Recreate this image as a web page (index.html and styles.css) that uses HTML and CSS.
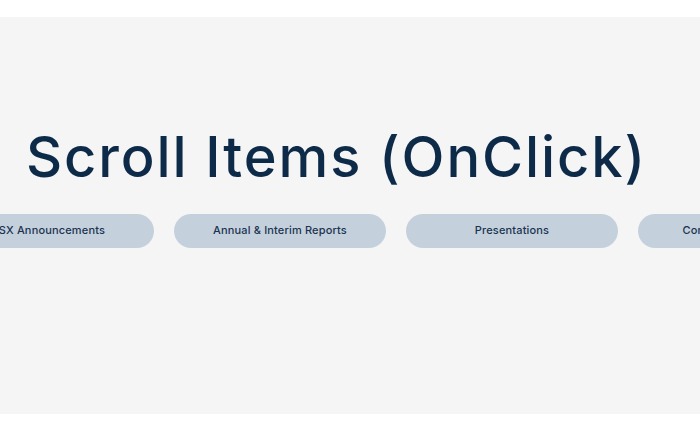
FILE: index.html
```html
<!DOCTYPE html>
<html>
<head>
<meta charset="utf-8">
<link rel="stylesheet" href="styles.css">
</head>
<body>
<div class="page">
  <section class="panel">
    <h1 class="title">Scroll Items (OnClick)</h1>
    <div class="scroller">
      <div class="track">
        <button class="pill">ASX Announcements</button>
        <button class="pill">Annual &amp; Interim Reports</button>
        <button class="pill">Presentations</button>
        <button class="pill">Corporate Governance</button>
      </div>
    </div>
  </section>
</div>
</body>
</html>
```
FILE: styles.css
```css
html, body {
  margin: 0;
  padding: 0;
  background: #ffffff;
}
.page {
  padding-top: 17px;
  width: 700px;
  height: 433px;
  box-sizing: border-box;
  overflow: hidden;
}
.panel {
  background: #f5f5f5;
  height: 397px;
  padding-top: 104px;
  box-sizing: border-box;
}
.title {
  margin: 0 0 0 26px;
  font-family: "Inter", "DejaVu Sans", sans-serif;
  font-weight: 500;
  font-size: 56px;
  letter-spacing: 1.9px;
  line-height: 72px;
  color: #0d2b49;
  white-space: nowrap;
}
.scroller {
  overflow: hidden;
  margin-top: 21px;
}
.track {
  display: flex;
  gap: 20px;
  margin-left: -58px;
}
.pill {
  flex: 0 0 212px;
  height: 34px;
  border: 0;
  border-radius: 17px;
  background: #c4d1dc;
  color: #1b3350;
  font-family: "Inter", "DejaVu Sans", sans-serif;
  font-weight: 500;
  font-size: 11px;
  letter-spacing: 0.15px;
  padding: 0 0 3px 0;
  white-space: nowrap;
}
```
